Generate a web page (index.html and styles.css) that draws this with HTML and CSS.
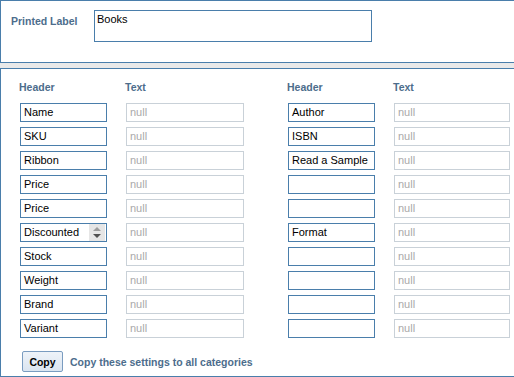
FILE: index.html
```html
<!DOCTYPE html>
<html>
<head>
<meta charset="utf-8">
<link rel="stylesheet" href="styles.css">
</head>
<body>
<div class="panel top">
  <label class="plabel">Printed Label</label>
  <div class="area">Books</div>
</div>
<div class="panel main">
  <div class="groups">
    <div class="group">
      <div class="lab">Header</div><div class="lab">Text</div>
      <div class="hin">Name</div><div class="tin">null</div>
      <div class="hin">SKU</div><div class="tin">null</div>
      <div class="hin">Ribbon</div><div class="tin">null</div>
      <div class="hin">Price</div><div class="tin">null</div>
      <div class="hin">Price</div><div class="tin">null</div>
      <div class="hin spin">Discounted<span class="spinner"><span class="up"></span><span class="down"></span></span></div><div class="tin">null</div>
      <div class="hin">Stock</div><div class="tin">null</div>
      <div class="hin">Weight</div><div class="tin">null</div>
      <div class="hin">Brand</div><div class="tin">null</div>
      <div class="hin">Variant</div><div class="tin">null</div>
    </div>
    <div class="group right">
      <div class="lab">Header</div><div class="lab">Text</div>
      <div class="hin">Author</div><div class="tin">null</div>
      <div class="hin">ISBN</div><div class="tin">null</div>
      <div class="hin">Read a Sample</div><div class="tin">null</div>
      <div class="hin"></div><div class="tin">null</div>
      <div class="hin"></div><div class="tin">null</div>
      <div class="hin">Format</div><div class="tin">null</div>
      <div class="hin"></div><div class="tin">null</div>
      <div class="hin"></div><div class="tin">null</div>
      <div class="hin"></div><div class="tin">null</div>
      <div class="hin"></div><div class="tin">null</div>
    </div>
  </div>
  <div class="copyrow">
    <button class="btn">Copy</button>
    <span class="copytext">Copy these settings to all categories</span>
  </div>
</div>
</body>
</html>
```

FILE: styles.css
```css
html, body {
  margin: 0;
  padding: 0;
  background: #e9e9e9;
  overflow: hidden;
  width: 514px;
  height: 377px;
}
body {
  font-family: "Liberation Sans", Arial, sans-serif;
}
.panel {
  width: 100%;
  background: #fff;
  border: 1px solid #4a7eab;
  border-right: none;
  box-sizing: border-box;
}
.top {
  height: 63px;
  display: flex;
  align-items: flex-start;
  padding: 9px 0 0 10px;
}
.plabel {
  width: 83px;
  font-size: 10.5px;
  font-weight: bold;
  color: #4d6d8c;
  margin-top: 5px;
}
.area {
  width: 278px;
  height: 32px;
  box-sizing: border-box;
  border: 1px solid #4a7eab;
  font-size: 11px;
  color: #000;
  padding: 2px 2px;
}
.main {
  margin-top: 5px;
  height: 309px;
  padding: 11px 0 0 18px;
}
.groups {
  display: flex;
  gap: 43px;
}
.group {
  display: grid;
  grid-template-columns: 88px 119px;
  column-gap: 18px;
  row-gap: 5px;
}
.group.right {
  grid-template-columns: 88px 117px;
}
.lab {
  font-size: 10.5px;
  font-weight: bold;
  color: #4d6d8c;
  height: 14px;
  line-height: 14px;
  margin-bottom: 4px;
}
.hin, .tin {
  height: 19px;
  box-sizing: border-box;
  font-size: 11px;
  line-height: 17px;
  padding: 0 3px;
  margin-left: 1px;
  white-space: nowrap;
  overflow: hidden;
}
.hin {
  border: 1px solid #4a7eab;
  color: #000;
}
.tin {
  border: 1px solid #c9d1d8;
  color: #a9a9a9;
}
.spin {
  position: relative;
}
.spinner {
  position: absolute;
  right: 1px;
  top: 0;
  width: 16px;
  height: 17px;
  background: #e6e6e6;
}
.spinner .up {
  position: absolute;
  left: 4px;
  top: 3px;
  border-left: 4px solid transparent;
  border-right: 4px solid transparent;
  border-bottom: 4px solid #9d9d9d;
}
.spinner .down {
  position: absolute;
  left: 4px;
  top: 10px;
  border-left: 4px solid transparent;
  border-right: 4px solid transparent;
  border-top: 4px solid #505050;
}
.copyrow {
  display: flex;
  align-items: center;
  gap: 7px;
  margin-top: 13px;
  padding-left: 3px;
}
.btn {
  width: 41px;
  height: 21px;
  padding: 0;
  border: 1px solid #7a9cc0;
  border-radius: 2px;
  background: linear-gradient(#eef3f9, #dbe5f0);
  font-family: "Liberation Sans", Arial, sans-serif;
  font-size: 10.5px;
  font-weight: bold;
  color: #000;
}
.copytext {
  font-size: 10.5px;
  font-weight: bold;
  color: #4d6d8c;
}
```
